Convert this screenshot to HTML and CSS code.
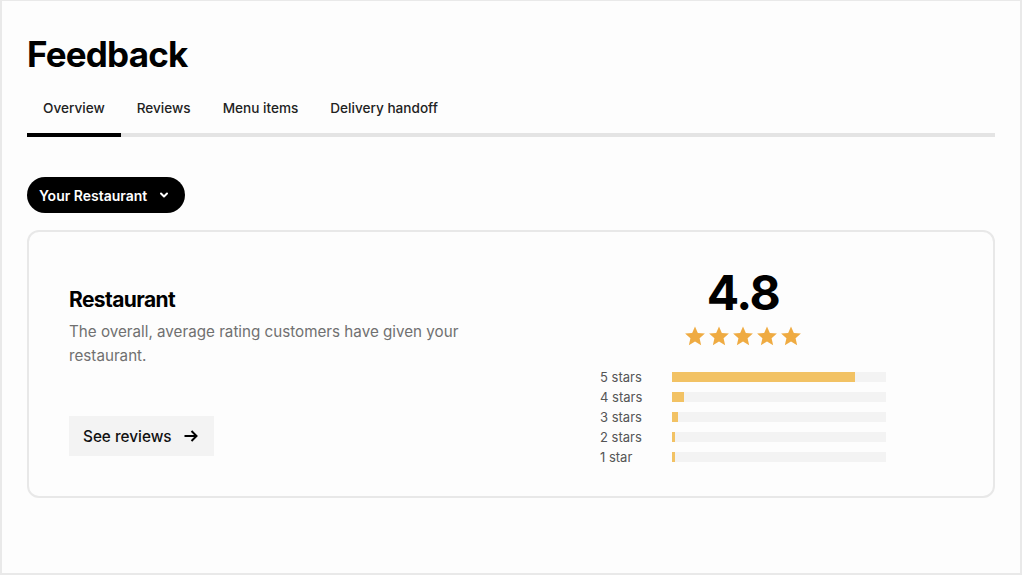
FILE: index.html
```html
<!DOCTYPE html>
<html lang="en">
<head>
    <meta charset="UTF-8">
    <meta name="viewport" content="width=device-width, initial-scale=1.0">
    <title>Feedback</title>
    <link rel="stylesheet" href="styles.css">
</head>
<body>
    <div class="screen">
        <h1 class="page-title">Feedback</h1>

        <!-- tabs -->
        <nav class="tabs">
            <a class="tab active">Overview</a>
            <a class="tab">Reviews</a>
            <a class="tab">Menu items</a>
            <a class="tab">Delivery handoff</a>
        </nav>

        <button class="store-picker">
            Your Restaurant
            <svg width="10" height="10" viewBox="0 0 10 10"><path d="M2 3.5l3 3 3-3" fill="none" stroke="#fff" stroke-width="2" stroke-linecap="round" stroke-linejoin="round"/></svg>
        </button>

        <!-- rating card -->
        <div class="card">
            <div class="card-info">
                <h2 class="card-title">Restaurant</h2>
                <p class="card-desc">The overall, average rating customers have given your restaurant.</p>
                <button class="btn-reviews">
                    See reviews
                    <svg width="16" height="16" viewBox="0 0 16 16"><path d="M1.5 8h12M8.5 3L13.5 8l-5 5" fill="none" stroke="#000" stroke-width="2" stroke-linejoin="miter"/></svg>
                </button>
            </div>

            <div class="rating">
                <div class="rating-value">4.8</div>
                <div class="stars">
                    <svg viewBox="0 0 24 24"><path d="M12 1.5l3.1 7.1 7.7.7-5.8 5.1 1.7 7.6L12 18l-6.7 4 1.7-7.6-5.8-5.1 7.7-.7z"/></svg>
                    <svg viewBox="0 0 24 24"><path d="M12 1.5l3.1 7.1 7.7.7-5.8 5.1 1.7 7.6L12 18l-6.7 4 1.7-7.6-5.8-5.1 7.7-.7z"/></svg>
                    <svg viewBox="0 0 24 24"><path d="M12 1.5l3.1 7.1 7.7.7-5.8 5.1 1.7 7.6L12 18l-6.7 4 1.7-7.6-5.8-5.1 7.7-.7z"/></svg>
                    <svg viewBox="0 0 24 24"><path d="M12 1.5l3.1 7.1 7.7.7-5.8 5.1 1.7 7.6L12 18l-6.7 4 1.7-7.6-5.8-5.1 7.7-.7z"/></svg>
                    <svg viewBox="0 0 24 24"><path d="M12 1.5l3.1 7.1 7.7.7-5.8 5.1 1.7 7.6L12 18l-6.7 4 1.7-7.6-5.8-5.1 7.7-.7z"/></svg>
                </div>
                <div class="breakdown">
                    <div class="row"><span class="row-label">5 stars</span><div class="track"><div class="fill" style="width: 85.5%"></div></div></div>
                    <div class="row"><span class="row-label">4 stars</span><div class="track"><div class="fill" style="width: 5.6%"></div></div></div>
                    <div class="row"><span class="row-label">3 stars</span><div class="track"><div class="fill" style="width: 2.6%"></div></div></div>
                    <div class="row"><span class="row-label">2 stars</span><div class="track"><div class="fill" style="width: 1.4%"></div></div></div>
                    <div class="row"><span class="row-label">1 star</span><div class="track"><div class="fill" style="width: 1.4%"></div></div></div>
                </div>
            </div>
        </div>
    </div>
</body>
</html>
```

FILE: styles.css
```css
* {
    box-sizing: border-box;
}
body {
    margin: 0;
    font-family: Inter, "Liberation Sans", sans-serif;
    background-color: #fff;
    color: #000;
}
.screen {
    width: 1022px;
    height: 575px;
    border: 2px solid #e9e9e9;
    border-top-width: 1px;
    padding: 33px 25px 0 25px;
    background-color: #fdfdfd;
}
.page-title {
    margin: 0;
    font-size: 35px;
    line-height: 40px;
    font-weight: 700;
    letter-spacing: -0.8px;
}
.tabs {
    display: flex;
    margin-top: 24px;
    border-bottom: 4px solid #e4e4e4;
}
.tab {
    padding: 0 16px 15px 16px;
    font-size: 13.6px;
    line-height: 20px;
    font-weight: 500;
    color: #222;
    margin-bottom: -4px;
    border-bottom: 4px solid transparent;
}
.tab.active {
    border-bottom-color: #000;
}
.store-picker {
    display: inline-flex;
    align-items: center;
    gap: 12px;
    margin-top: 40px;
    height: 36px;
    padding: 0 16px 0 12px;
    border: none;
    border-radius: 18px;
    background-color: #000;
    color: #fff;
    font-family: inherit;
    font-size: 14px;
    font-weight: 600;
}
.card {
    display: flex;
    align-items: center;
    justify-content: space-between;
    margin-top: 17px;
    height: 268px;
    border: 2px solid #e8e8e8;
    border-radius: 12px;
    padding: 4px 107px 0 40px;
}
.card-info {
    width: 400px;
    margin-top: 10px;
}
.card-title {
    margin: 0;
    font-size: 21px;
    line-height: 28px;
    font-weight: 700;
    letter-spacing: -0.6px;
}
.card-desc {
    margin: 6px 0 0 0;
    font-size: 15.2px;
    line-height: 24px;
    color: #707070;
}
.btn-reviews {
    display: inline-flex;
    align-items: center;
    gap: 11px;
    margin-top: 48px;
    height: 40px;
    padding: 0 15px 0 14px;
    border: none;
    background-color: #f3f3f3;
    font-family: inherit;
    font-size: 15.3px;
    font-weight: 500;
    color: #111;
}
.rating {
    width: 286px;
    display: flex;
    flex-direction: column;
    align-items: center;
}
.rating-value {
    font-size: 48px;
    line-height: 56px;
    font-weight: 700;
    letter-spacing: -1.5px;
}
.stars {
    display: flex;
    gap: 2px;
    margin-top: 4px;
}
.stars svg {
    width: 22px;
    height: 22px;
    fill: #efab42;
}
.breakdown {
    width: 100%;
    margin-top: 20px;
}
.row {
    display: flex;
    align-items: center;
    height: 20px;
}
.row-label {
    width: 72px;
    font-size: 13px;
    color: #555;
}
.track {
    flex: 1;
    height: 10px;
    background-color: #f3f3f3;
}
.fill {
    height: 100%;
    background-color: #f2c264;
}
```
